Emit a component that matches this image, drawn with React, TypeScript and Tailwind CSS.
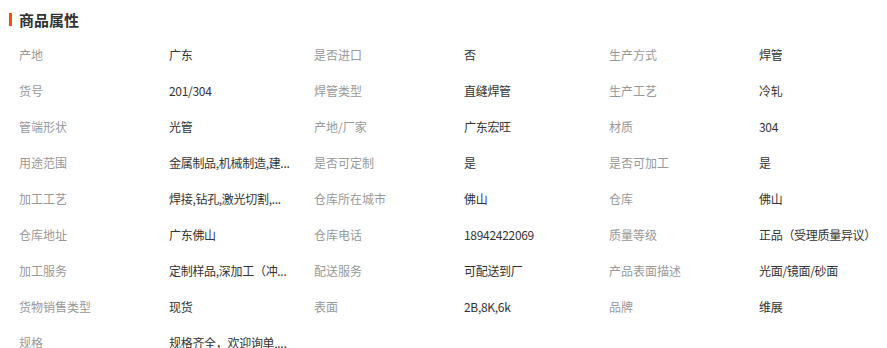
const attrs: [string, string][] = [
  ['产地', '广东'],
  ['是否进口', '否'],
  ['生产方式', '焊管'],
  ['货号', '201/304'],
  ['焊管类型', '直缝焊管'],
  ['生产工艺', '冷轧'],
  ['管端形状', '光管'],
  ['产地/厂家', '广东宏旺'],
  ['材质', '304'],
  ['用途范围', '金属制品,机械制造,建...'],
  ['是否可定制', '是'],
  ['是否可加工', '是'],
  ['加工工艺', '焊接,钻孔,激光切割,...'],
  ['仓库所在城市', '佛山'],
  ['仓库', '佛山'],
  ['仓库地址', '广东佛山'],
  ['仓库电话', '18942422069'],
  ['质量等级', '正品（受理质量异议）'],
  ['加工服务', '定制样品,深加工（冲...'],
  ['配送服务', '可配送到厂'],
  ['产品表面描述', '光面/镜面/砂面'],
  ['货物销售类型', '现货'],
  ['表面', '2B,8K,6k'],
  ['品牌', '维展'],
  ['规格', '规格齐全，欢迎询单,...'],
]

export default function App() {
  return (
    <div
      className="w-[887px] h-[348px] overflow-hidden bg-white text-[#333]"
      style={{ fontFamily: '"Noto Sans CJK SC", "Liberation Sans", sans-serif' }}
    >
      {/* ── Header ── */}
      <div className="h-[37px] flex items-center pt-[2px]">
        <span className="ml-[9px] w-[3px] h-[13px] bg-[#ff4a00]" />
        <h2 className="ml-[7px] text-[15px] font-bold leading-none">商品属性</h2>
      </div>

      {/* ── Attributes ── */}
      <div className="pl-[19px] grid grid-cols-[150px_145px_150px_145px_150px_145px]">
        {attrs.map(([label, value]) => (
          <div key={label} className="contents">
            <div className="h-[36px] flex items-center text-[12px] text-[#999]">{label}</div>
            <div className="h-[36px] flex items-center text-[12px] text-[#333] whitespace-nowrap tracking-[-0.3px]">
              {value}
            </div>
          </div>
        ))}
      </div>
    </div>
  )
}
